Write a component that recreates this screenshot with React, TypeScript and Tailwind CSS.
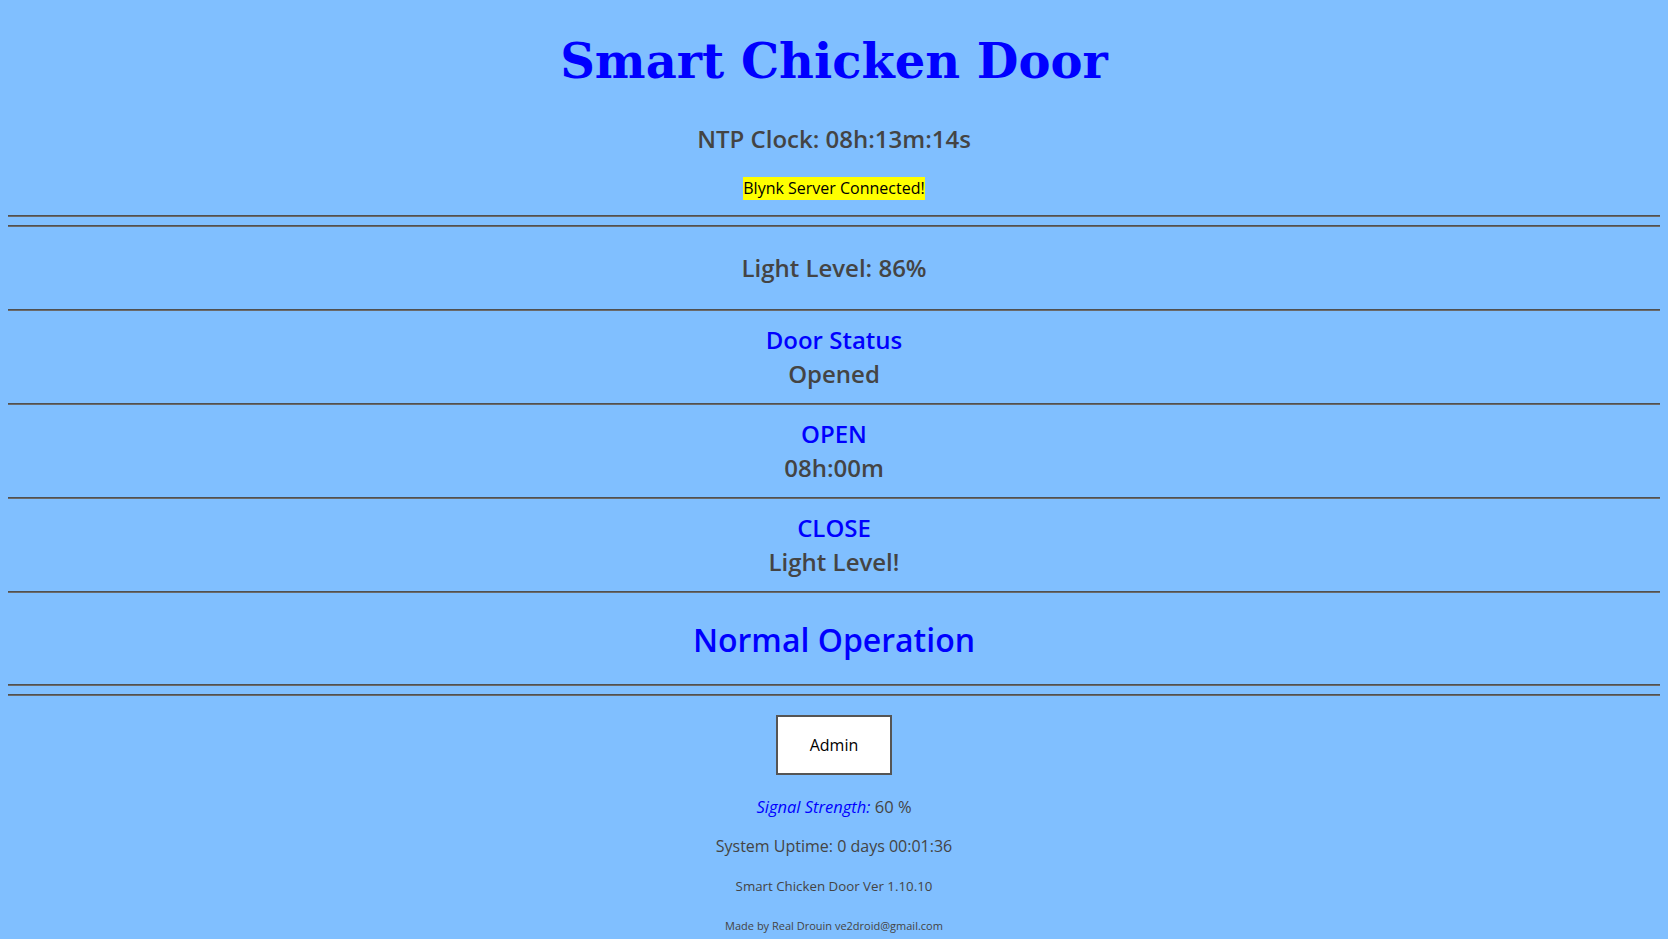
import React from "react";

const Hr = () => (
  <div className="mx-2 h-[2px] border-t border-b border-t-[#505050] border-b-[#6a6a6a]" />
);

const Section = ({ title, value }: { title: string; value: string }) => (
  <div className="py-[12px] text-center text-[24px] font-semibold leading-[34px]">
    <div className="text-[#0000ff]">{title}</div>
    <div className="text-[#444444]">{value}</div>
  </div>
);

export default function App() {
  return (
    <div
      className="min-h-[939px] w-full bg-[#80bfff] text-[#444444]"
      style={{ fontFamily: "'Open Sans', 'Liberation Sans', sans-serif" }}
    >
      <div className="pt-[33px] text-center">
        <h1
          className="text-[48px] font-bold leading-[56px] text-[#0000ff]"
          style={{ fontFamily: "'DejaVu Serif', serif" }}
        >
          Smart Chicken Door
        </h1>
        <div className="mt-[34px] text-[24px] font-semibold leading-[32px]">
          NTP Clock: 08h:13m:14s
        </div>
        <div className="mt-[21px] h-[39px]">
          <span className="inline-block bg-[#ffff00] text-[16px] leading-[23px] text-black">
            Blynk Server Connected!
          </span>
        </div>
      </div>
      <Hr />
      <div className="h-[8px]" />
      <Hr />
      <div className="py-[24px] text-center text-[24px] font-semibold leading-[34px]">
        Light Level: 86%
      </div>
      <Hr />
      <Section title="Door Status" value="Opened" />
      <Hr />
      <Section title="OPEN" value="08h:00m" />
      <Hr />
      <Section title="CLOSE" value="Light Level!" />
      <Hr />
      <div className="pt-[27px] pb-[24px] text-center text-[32px] font-semibold leading-[40px] text-[#0000ff]">
        Normal Operation
      </div>
      <Hr />
      <div className="h-[8px]" />
      <Hr />
      <div className="flex flex-col items-center pt-[19px]">
        <button className="h-[60px] w-[116px] border-2 border-[#555555] bg-white text-[16px] text-black">
          Admin
        </button>
        <div className="mt-[21px] text-[16.5px] leading-[22px]">
          <span className="italic text-[#0000ff]">Signal Strength:</span> 60 %
        </div>
        <div className="mt-[17px] text-[16px] leading-[22px]">
          System Uptime: 0 days 00:01:36
        </div>
        <div className="mt-[19px] text-[13.3px] leading-[20px]">
          Smart Chicken Door Ver 1.10.10
        </div>
        <div className="mt-[21px] text-[11px] leading-[17px]">
          Made by Real Drouin ve2droid@gmail.com
        </div>
      </div>
    </div>
  );
}
